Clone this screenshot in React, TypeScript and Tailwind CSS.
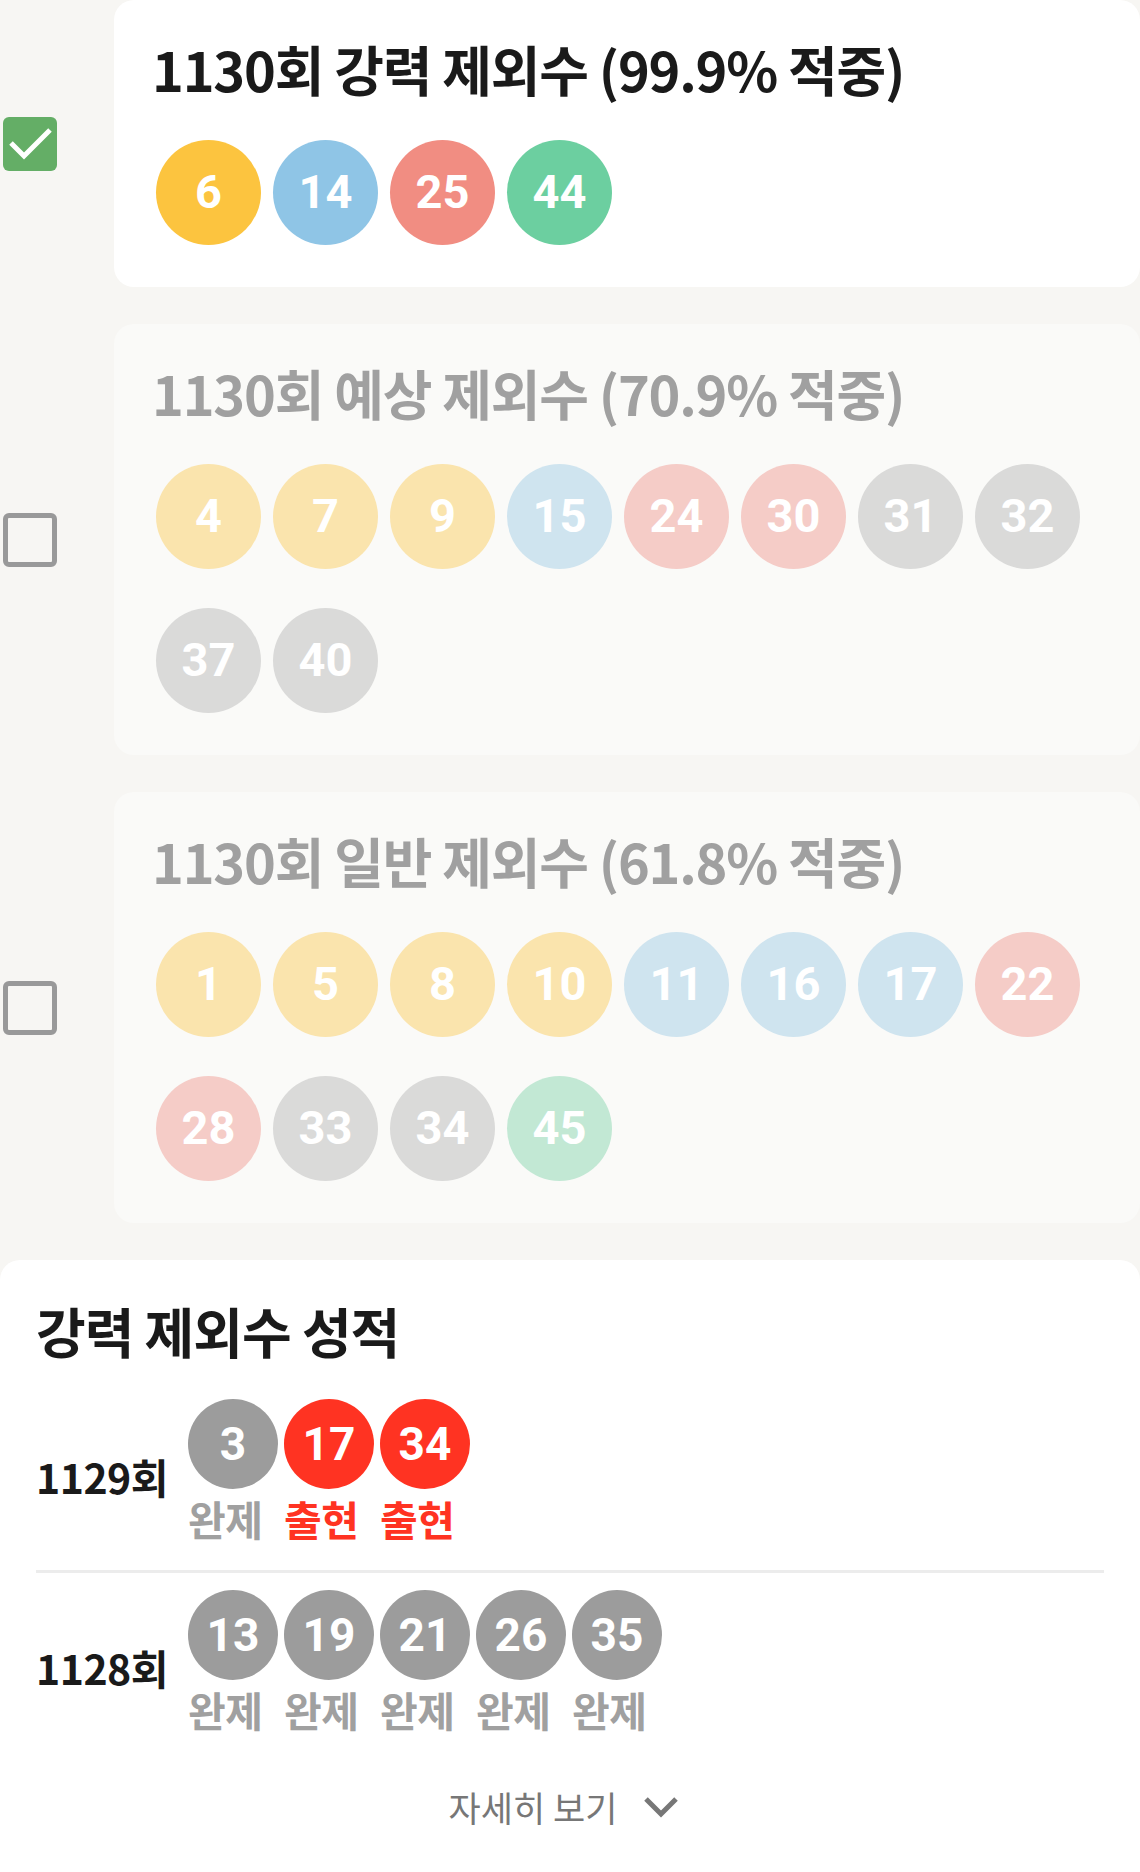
import React from 'react';

// 번호 색상 (활성 / 비활성)
const ballColor = (n: number, faded: boolean) => {
  if (n <= 10) return faded ? 'bg-[#fae4ad]' : 'bg-[#fcc43f]';
  if (n <= 20) return faded ? 'bg-[#cfe4ef]' : 'bg-[#8fc5e6]';
  if (n <= 30) return faded ? 'bg-[#f5ccc7]' : 'bg-[#f18d82]';
  if (n <= 40) return faded ? 'bg-[#dadad9]' : 'bg-[#9c9c9c]';
  return faded ? 'bg-[#c2e8d4]' : 'bg-[#6ccfa0]';
};

const excludeSets = [
  { title: '1130회 강력 제외수 (99.9% 적중)', nums: [6, 14, 25, 44], checked: true },
  { title: '1130회 예상 제외수 (70.9% 적중)', nums: [4, 7, 9, 15, 24, 30, 31, 32, 37, 40], checked: false },
  { title: '1130회 일반 제외수 (61.8% 적중)', nums: [1, 5, 8, 10, 11, 16, 17, 22, 28, 33, 34, 45], checked: false },
];

const history = [
  {
    round: '1129회',
    items: [
      { n: 3, hit: false },
      { n: 17, hit: true },
      { n: 34, hit: true },
    ],
  },
  {
    round: '1128회',
    items: [
      { n: 13, hit: false },
      { n: 19, hit: false },
      { n: 21, hit: false },
      { n: 26, hit: false },
      { n: 35, hit: false },
    ],
  },
];

function Ball({ n, faded }: { n: number; faded: boolean }) {
  return (
    <div
      className={`${ballColor(n, faded)} w-[105px] h-[105px] rounded-full flex items-center justify-center text-white text-[47px] font-bold font-['Roboto',sans-serif]`}
    >
      {n}
    </div>
  );
}

function Checkbox({ checked }: { checked: boolean }) {
  if (checked) {
    return (
      <div className="w-[54px] h-[54px] rounded-[6px] bg-[#64ae66] flex items-center justify-center">
        <svg width="54" height="54" viewBox="0 0 54 54" fill="none">
          <path d="M8 26L21 39L47 13" stroke="white" strokeWidth="5" />
        </svg>
      </div>
    );
  }
  return <div className="w-[54px] h-[54px] rounded-[6px] border-[5px] border-[#999999]" />;
}

export default function App() {
  return (
    <div className="w-[1140px] h-[1872px] overflow-hidden bg-[#f7f6f3] flex flex-col gap-[37px] font-['Noto_Sans_CJK_KR',sans-serif]">
      {excludeSets.map((set) => (
        <div key={set.title} className="flex items-center">
          <div className="w-[114px] pl-[3px]">
            <Checkbox checked={set.checked} />
          </div>
          <div
            className={`flex-1 rounded-[20px] pl-[38px] pr-[30px] pt-[36px] pb-[42px] ${
              set.checked ? 'bg-white' : 'bg-[#fafaf8]'
            }`}
          >
            <h2
              className={`text-[54px] leading-[65px] font-bold tracking-[-1.2px] ${
                set.checked ? 'text-[#1a1a1a]' : 'text-[#a0a0a0]'
              }`}
            >
              {set.title}
            </h2>
            <div className="mt-[39px] flex flex-wrap gap-x-[12px] gap-y-[39px] pl-[4px]">
              {set.nums.map((n) => (
                <Ball key={n} n={n} faded={!set.checked} />
              ))}
            </div>
          </div>
        </div>
      ))}

      {/* 강력 제외수 성적 */}
      <div className="flex-1 bg-white rounded-t-[20px] px-[36px] pt-[38px]">
        <h2 className="text-[54px] leading-[65px] font-bold tracking-[-1px] text-[#1a1a1a]">강력 제외수 성적</h2>
        <div className="mt-[36px]">
          {history.map((row, i) => (
            <div
              key={row.round}
              className={`flex items-center ${i === 0 ? 'pb-[27px] border-b-[3px] border-[#ececec]' : 'pt-[17px]'}`}
            >
              <div className="w-[152px] pt-[12px] text-[41px] font-bold text-[#1a1a1a] tracking-[-0.5px]">
                {row.round}
              </div>
              <div className="flex gap-[6px]">
                {row.items.map((it) => (
                  <div key={it.n} className="flex flex-col w-[90px]">
                    <div
                      className={`w-[90px] h-[90px] rounded-full flex items-center justify-center text-white text-[46px] font-bold font-['Roboto',sans-serif] ${
                        it.hit ? 'bg-[#ff3322]' : 'bg-[#9c9c9c]'
                      }`}
                    >
                      {it.n}
                    </div>
                    <span
                      className={`mt-[4px] text-[41px] leading-[50px] font-bold tracking-[-0.5px] whitespace-nowrap ${
                        it.hit ? 'text-[#ff3322]' : 'text-[#a0a0a0]'
                      }`}
                    >
                      {it.hit ? '출현' : '완제'}
                    </span>
                  </div>
                ))}
              </div>
            </div>
          ))}
        </div>
        <button className="mt-[47px] mx-auto pr-[12px] flex items-center gap-[26px] text-[35px] text-[#777777]">
          <span>자세히 보기</span>
          <svg width="36" height="22" viewBox="0 0 36 22" fill="none">
            <path d="M3 3L18 18L33 3" stroke="#777777" strokeWidth="5" />
          </svg>
        </button>
      </div>
    </div>
  );
}
